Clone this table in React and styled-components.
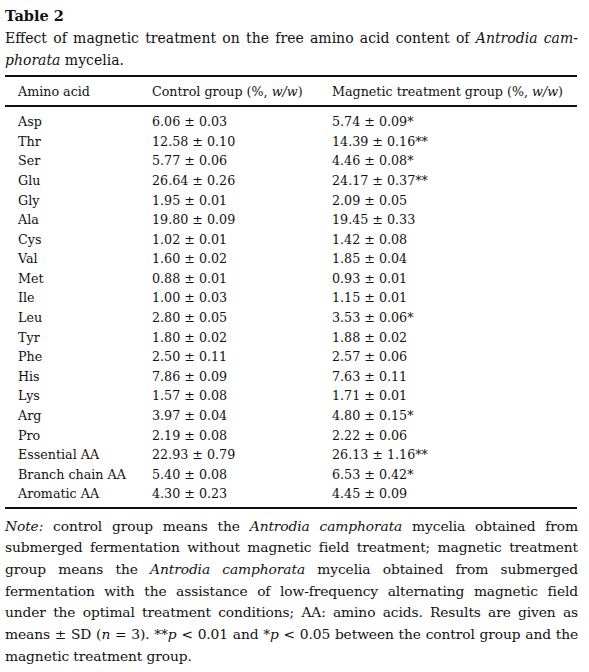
import React from "react";
import styled, { createGlobalStyle } from "styled-components";

const rows = [
  ["Asp", "6.06 ± 0.03", "5.74 ± 0.09*"],
  ["Thr", "12.58 ± 0.10", "14.39 ± 0.16**"],
  ["Ser", "5.77 ± 0.06", "4.46 ± 0.08*"],
  ["Glu", "26.64 ± 0.26", "24.17 ± 0.37**"],
  ["Gly", "1.95 ± 0.01", "2.09 ± 0.05"],
  ["Ala", "19.80 ± 0.09", "19.45 ± 0.33"],
  ["Cys", "1.02 ± 0.01", "1.42 ± 0.08"],
  ["Val", "1.60 ± 0.02", "1.85 ± 0.04"],
  ["Met", "0.88 ± 0.01", "0.93 ± 0.01"],
  ["Ile", "1.00 ± 0.03", "1.15 ± 0.01"],
  ["Leu", "2.80 ± 0.05", "3.53 ± 0.06*"],
  ["Tyr", "1.80 ± 0.02", "1.88 ± 0.02"],
  ["Phe", "2.50 ± 0.11", "2.57 ± 0.06"],
  ["His", "7.86 ± 0.09", "7.63 ± 0.11"],
  ["Lys", "1.57 ± 0.08", "1.71 ± 0.01"],
  ["Arg", "3.97 ± 0.04", "4.80 ± 0.15*"],
  ["Pro", "2.19 ± 0.08", "2.22 ± 0.06"],
  ["Essential AA", "22.93 ± 0.79", "26.13 ± 1.16**"],
  ["Branch chain AA", "5.40 ± 0.08", "6.53 ± 0.42*"],
  ["Aromatic AA", "4.30 ± 0.23", "4.45 ± 0.09"],
];

const GlobalStyle = createGlobalStyle`
  body {
    margin: 0;
    background: #fff;
    color: #111;
    font-family: "DejaVu Serif", "Liberation Serif", serif;
  }
`;

export default function App() {
  return (
    <>
      <GlobalStyle />
      <Page>
        <Title>Table 2</Title>
        <Caption>
          <Line>
            Effect of magnetic treatment on the free amino acid content of{" "}
            <i>Antrodia cam-</i>
          </Line>
          <LastLine>
            <i>phorata</i> mycelia.
          </LastLine>
        </Caption>

        <Table>
          <HeadRow>
            <span>Amino acid</span>
            <span>
              Control group (%, <i>w/w</i>)
            </span>
            <span>
              Magnetic treatment group (%, <i>w/w</i>)
            </span>
          </HeadRow>
          <Body>
            {rows.map((r) => (
              <Row key={r[0]}>
                <span>{r[0]}</span>
                <span>{r[1]}</span>
                <span>{r[2]}</span>
              </Row>
            ))}
          </Body>
        </Table>

        <Note>
          <Line>
            <i>Note:</i> control group means the <i>Antrodia camphorata</i> mycelia obtained from
          </Line>
          <Line>
            submerged fermentation without magnetic field treatment; magnetic treatment
          </Line>
          <Line>
            group means the <i>Antrodia camphorata</i> mycelia obtained from submerged
          </Line>
          <Line>
            fermentation with the assistance of low-frequency alternating magnetic field
          </Line>
          <Line>
            under the optimal treatment conditions; AA: amino acids. Results are given as
          </Line>
          <Line>
            means ± SD (<i>n</i> = 3). **<i>p</i> &lt; 0.01 and *<i>p</i> &lt; 0.05 between the control group and the
          </Line>
          <LastLine>magnetic treatment group.</LastLine>
        </Note>
      </Page>
    </>
  );
}

const Page = styled.div`
  width: 573px;
  padding: 5px 0 0 5px;
`;

const Title = styled.div`
  font-size: 14.5px;
  font-weight: bold;
  line-height: 22px;
`;

const Caption = styled.div`
  font-size: 14px;
  line-height: 22px;
`;

const Line = styled.div`
  text-align: justify;
  text-align-last: justify;
  white-space: nowrap;
`;

const LastLine = styled.div`
  text-align: left;
`;

const Table = styled.div`
  margin-top: 4px;
  width: 572px;
  border-top: 2px solid #111;
  border-bottom: 2px solid #111;
  font-size: 12.7px;
`;

const HeadRow = styled.div`
  display: grid;
  grid-template-columns: 134px 180px 1fr;
  padding-left: 13px;
  height: 28px;
  align-items: center;
  border-bottom: 2px solid #111;
`;

const Body = styled.div`
  padding: 5px 0 3px;
`;

const Row = styled.div`
  display: grid;
  grid-template-columns: 134px 180px 1fr;
  padding-left: 13px;
  height: 19.58px;
  align-items: center;
`;

const Note = styled.div`
  margin-top: 7px;
  font-size: 13.8px;
  line-height: 21.67px;
  letter-spacing: -0.1px;
`;
